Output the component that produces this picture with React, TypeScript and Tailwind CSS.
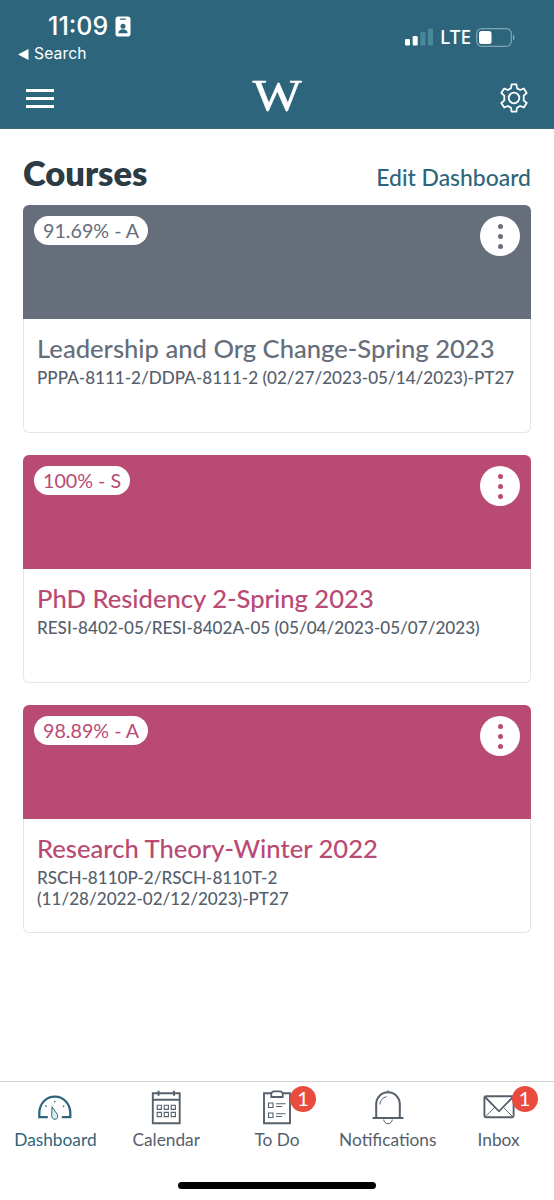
import React from 'react';
import { clsx } from 'clsx';

interface Course {
  grade: string;
  title: string;
  code: string[];
  banner: string;
  accent: string;
}

const courses: Course[] = [
  {
    grade: '91.69% - A',
    title: 'Leadership and Org Change-Spring 2023',
    code: ['PPPA-8111-2/DDPA-8111-2 (02/27/2023-05/14/2023)-PT27'],
    banner: 'bg-[#656e7a]',
    accent: 'text-[#656e7a]',
  },
  {
    grade: '100% - S',
    title: 'PhD Residency 2-Spring 2023',
    code: ['RESI-8402-05/RESI-8402A-05 (05/04/2023-05/07/2023)'],
    banner: 'bg-[#b94a74]',
    accent: 'text-[#b94a74]',
  },
  {
    grade: '98.89% - A',
    title: 'Research Theory-Winter 2022',
    code: ['RSCH-8110P-2/RSCH-8110T-2', '(11/28/2022-02/12/2023)-PT27'],
    banner: 'bg-[#b94a74]',
    accent: 'text-[#b94a74]',
  },
];

function GearIcon() {
  return (
    <svg width="28" height="30" viewBox="0 0 28 30" fill="none" stroke="currentColor" strokeWidth="1.8" strokeLinejoin="round">
      <path d="M11.6 1.300h4.800l.6 3.900 3.100 1.800 3.700-1.500 2.900 4.500-3 2.600v4.800l3 2.600-2.900 4.500-3.700-1.500-3.100 1.800-.6 3.900h-4.800l-.6-3.900L7.900 23l-3.700 1.500L1.300 20l3-2.600v-4.800l-3-2.600 2.900-4.500L7.900 7 11 5.200z" />
      <circle cx="14" cy="15" r="5.300" />
    </svg>
  );
}

function DashboardIcon() {
  return (
    <svg width="36" height="36" viewBox="0 0 36 36" fill="none" stroke="currentColor">
      <path d="M10.800 28.200H2.300v-4c0-9.200 6.500-16.500 15.500-16.500s15.500 7.300 15.500 16.500v4h-8.500" strokeWidth="2.300" />
      <path d="M8.300 16.500l1.300 1.200M17.800 11.700v1.800M27.300 16.500l-1.300 1.200" strokeWidth="1.200" />
      <path d="M15 17.700l5.300 7.800c1.200 2.300-.2 4.700-2.200 4.800-2.300.1-3.600-1.900-3.400-4z" strokeWidth="1" fill="#d9eef3" />
    </svg>
  );
}

function CalendarIcon() {
  return (
    <svg width="36" height="36" viewBox="0 0 36 36" fill="none" stroke="currentColor">
      <path d="M4.800 4.300h26.900v30H4.800zM4.800 10.800h26.900" strokeWidth="1.900" />
      <path d="M10.500 1.800v5M26 1.800v5" strokeWidth="2" />
      <path d="M9.200 16.200h4.200v4.200H9.200zM16.200 16.200h4.200v4.200h-4.200zM23.200 16.200h4.200v4.200h-4.200zM9.200 23.400h4.200v4.200H9.200zM16.200 23.400h4.200v4.200h-4.200zM23.200 23.400h4.200v4.200h-4.200z" strokeWidth="1.100" />
    </svg>
  );
}

function TodoIcon() {
  return (
    <svg width="36" height="36" viewBox="0 0 36 36" fill="none" stroke="currentColor">
      <path d="M12 4.300H5v30h26v-30h-7" strokeWidth="1.900" />
      <path d="M12.300 8V4l2-1.700h7.400l2 1.700v4z" strokeWidth="1.800" />
      <path d="M9.500 14h4.500v4.500H9.500zM9.500 24h4.500v4.500H9.500zM17 14.700h9.500M17 17.500h6M17 24.700h9.500M17 27.500h6" strokeWidth="1.100" />
    </svg>
  );
}

function BellIcon() {
  return (
    <svg width="36" height="36" viewBox="0 0 36 36" fill="none" stroke="currentColor">
      <path d="M2.500 29h31M6.200 29V15.300C6.200 8.300 11.500 3.300 18 3.300s11.800 5 11.800 12V29" strokeWidth="2" />
      <path d="M18 3.500V1M10 15.500c0-4 2.800-7 6.500-7.800M13.700 30.500c.2 2.500 2 4.200 4.300 4.200s4.100-1.700 4.300-4.200" strokeWidth="1" />
    </svg>
  );
}

function InboxIcon() {
  return (
    <svg width="36" height="36" viewBox="0 0 36 36" fill="none" stroke="currentColor">
      <path d="M4.500 27.500l9-9M31.500 27.500l-9-9" strokeWidth="0.900" />
      <rect x="3.400" y="7.300" width="29.200" height="21" rx="1.800" strokeWidth="1.900" />
      <path d="M4 8l14 14.300L32 8" strokeWidth="1.800" />
    </svg>
  );
}

const tabs = [
  { label: 'Dashboard', icon: DashboardIcon, active: true },
  { label: 'Calendar', icon: CalendarIcon },
  { label: 'To Do', icon: TodoIcon, badge: 1 },
  { label: 'Notifications', icon: BellIcon },
  { label: 'Inbox', icon: InboxIcon, badge: 1 },
];

function StatusBar() {
  return (
    <div className="flex h-[67px] justify-between pr-[38px] pl-[18px] font-[Inter,sans-serif]">
      <div>
        <div className="flex items-center gap-[7px] pt-3 pl-[30px]">
          <span className="w-[60px] text-[25px] leading-7 font-medium">11:09</span>
          <svg width="16" height="21" viewBox="0 0 16 21">
            <rect x="0.500" y="0.500" width="15" height="20" rx="2.800" fill="#fff" />
            <path d="M5.500 3.200h5" stroke="#2d667c" strokeWidth="1.200" strokeLinecap="round" />
            <circle cx="8" cy="10.300" r="2.500" fill="#2d667c" />
            <path d="M3.300 17.300c.2-2.700 2.100-4 4.700-4s4.500 1.300 4.700 4z" fill="#2d667c" />
          </svg>
        </div>
        <div className="flex items-center gap-[5px] pt-[3px]">
          <svg width="11" height="11" viewBox="0 0 11 11" fill="currentColor">
            <path d="M0 5.500L10.500 0v11z" />
          </svg>
          <span className="text-[15.700px] leading-[22px] tracking-[0.100px]">Search</span>
        </div>
      </div>
      <div className="mt-[27px] flex h-5 items-center">
        <svg width="29" height="18" viewBox="0 0 29 18">
          <rect x="0" y="11" width="5" height="6.500" rx="1.300" fill="#fff" />
          <rect x="7.700" y="8" width="5" height="9.500" rx="1.300" fill="#fff" />
          <rect x="15.400" y="4" width="5" height="13.500" rx="1.300" fill="#4a8799" />
          <rect x="23" y="0.500" width="5" height="17" rx="1.300" fill="#4a8799" />
        </svg>
        <span className="ml-1.5 w-[30px] font-['Noto_Sans',sans-serif] text-[19px] leading-5 font-medium">LTE</span>
        <svg className="ml-1.5" width="40" height="19" viewBox="0 0 40 19">
          <rect x="0.700" y="0.700" width="34.600" height="17.600" rx="5" fill="none" stroke="#80a7b3" strokeWidth="1.200" />
          <rect x="3" y="3" width="12.500" height="13" rx="2.500" fill="#fff" />
          <path d="M37 6.500c2 .8 2 5.200 0 6z" fill="#80a7b3" />
        </svg>
      </div>
    </div>
  );
}

function CourseCard({ course }: { course: Course }) {
  return (
    <div className="flex h-[228px] flex-col">
      <div className={clsx('flex h-[114px] items-start justify-between rounded-t-[6px] px-[11px] pt-[11px]', course.banner, course.accent)}>
        <span className="h-[29px] rounded-full bg-white px-[9px] text-[19.700px] leading-[29px]">{course.grade}</span>
        <button className="flex size-10 flex-col items-center justify-center gap-[5px] rounded-full bg-white">
          <span className="size-[5px] rounded-full bg-current" />
          <span className="size-[5px] rounded-full bg-current" />
          <span className="size-[5px] rounded-full bg-current" />
        </button>
      </div>
      <div className="flex-1 rounded-b-[6px] border border-t-0 border-[#e4e5e7] px-[13px] pt-3">
        <h2 className={clsx('mb-px text-[25.600px] leading-[35px] font-medium whitespace-nowrap', course.accent)}>{course.title}</h2>
        <p className="text-[17.080px] leading-[21px] font-medium whitespace-nowrap text-[#56606c]">
          {course.code.map((line) => (
            <span key={line} className="block">{line}</span>
          ))}
        </p>
      </div>
    </div>
  );
}

export default function App() {
  return (
    <div className="flex h-[1200px] w-[554px] flex-col overflow-hidden bg-white font-[Lato,sans-serif]">
      <header className="h-[129px] border-b border-[#3d6878] bg-[#2d667c] text-white">
        <StatusBar />
        <div className="flex h-[61px] items-center justify-between px-[26px]">
          <button className="flex w-7 flex-col gap-[5px] pt-px">
            <span className="h-[3px] bg-white" />
            <span className="h-[3px] bg-white" />
            <span className="h-[3px] bg-white" />
          </button>
          <span className="scale-x-[1.150] pb-1.5 font-['Liberation_Serif',serif] text-[45px] leading-[54px] [-webkit-text-stroke:0.6px_white]">W</span>
          <GearIcon />
        </div>
      </header>

      <main className="flex-1 px-[23px]">
        <div className="flex h-[76px] items-baseline justify-between pt-[23px]">
          <h1 className="text-[34.500px] leading-[42px] font-extrabold text-[#2d3b45]">Courses</h1>
          <button className="text-[22.900px] leading-7 font-medium text-[#2d667c]">Edit Dashboard</button>
        </div>
        <div className="flex flex-col gap-[22px]">
          {courses.map((course) => (
            <CourseCard key={course.title} course={course} />
          ))}
        </div>
      </main>

      <nav className="flex h-[119px] flex-col items-center justify-between border-t border-[#d2d3d5] pb-[11px]">
        <div className="grid w-full grid-cols-5 pt-[7px]">
          {tabs.map(({ label, icon: Icon, badge, active }) => (
            <button key={label} className={clsx('flex flex-col items-center', active ? 'text-[#2d667c]' : 'text-[#56606c]')}>
              <span className="relative">
                <Icon />
                {badge && (
                  <span className="absolute -top-[3px] left-[31px] size-[26px] rounded-full bg-[#e94b3f] text-center text-[20px] leading-[25px] text-white">
                    {badge}
                  </span>
                )}
              </span>
              <span className="mt-[3px] text-[17.300px] leading-6">{label}</span>
            </button>
          ))}
        </div>
        <div className="h-[7px] w-[198px] rounded-full bg-black" />
      </nav>
    </div>
  );
}
